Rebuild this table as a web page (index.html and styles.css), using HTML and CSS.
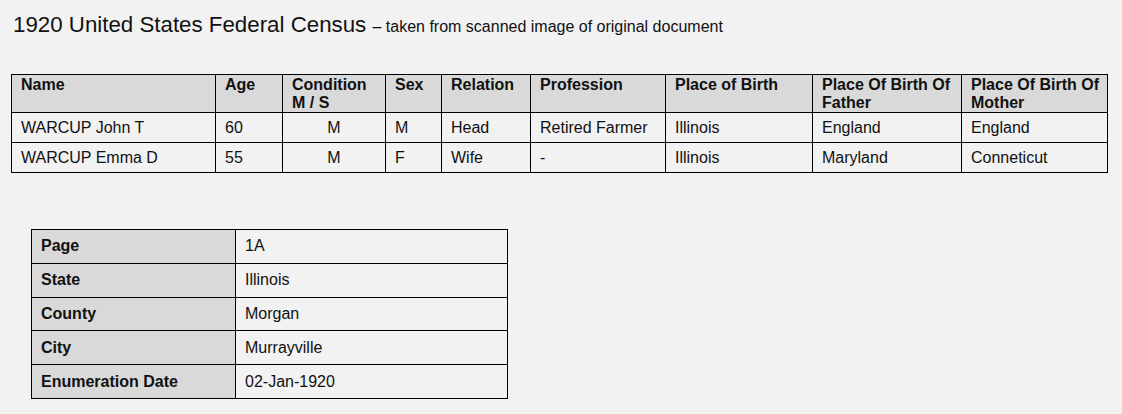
FILE: index.html
```html
<!DOCTYPE html>
<html lang="en">
<head>
<meta charset="utf-8">
<title>1920 United States Federal Census</title>
<link rel="stylesheet" href="styles.css">
</head>
<body>
<div class="page">
  <h1 class="title">1920 United States Federal Census <span class="sub">– taken from scanned image of original document</span></h1>

  <table class="census">
    <colgroup>
      <col class="c-name"><col class="c-age"><col class="c-cond"><col class="c-sex"><col class="c-rel"><col class="c-prof"><col class="c-pob"><col class="c-pobf"><col class="c-pobm">
    </colgroup>
    <thead>
      <tr>
        <th>Name</th>
        <th>Age</th>
        <th>Condition<br>M / S</th>
        <th>Sex</th>
        <th>Relation</th>
        <th>Profession</th>
        <th>Place of Birth</th>
        <th>Place Of Birth Of Father</th>
        <th>Place Of Birth Of Mother</th>
      </tr>
    </thead>
    <tbody>
      <tr>
        <td>WARCUP John T</td>
        <td>60</td>
        <td class="center">M</td>
        <td>M</td>
        <td>Head</td>
        <td>Retired Farmer</td>
        <td>Illinois</td>
        <td>England</td>
        <td>England</td>
      </tr>
      <tr>
        <td>WARCUP Emma D</td>
        <td>55</td>
        <td class="center">M</td>
        <td>F</td>
        <td>Wife</td>
        <td>-</td>
        <td>Illinois</td>
        <td>Maryland</td>
        <td>Conneticut</td>
      </tr>
    </tbody>
  </table>

  <table class="details">
    <colgroup><col class="d-label"><col class="d-value"></colgroup>
    <tbody>
      <tr><th>Page</th><td>1A</td></tr>
      <tr><th>State</th><td>Illinois</td></tr>
      <tr><th>County</th><td>Morgan</td></tr>
      <tr><th>City</th><td>Murrayville</td></tr>
      <tr><th>Enumeration Date</th><td>02-Jan-1920</td></tr>
    </tbody>
  </table>
</div>
</body>
</html>
```

FILE: styles.css
```css
html, body {
  margin: 0;
  padding: 0;
  background: #f2f2f2;
}
body {
  font-family: "Liberation Sans", Arial, sans-serif;
  color: #111;
}
.page {
  padding: 12px 0 0 11px;
}
.title {
  margin: 0 0 35px 2px;
  font-size: 22.3px;
  font-weight: normal;
  line-height: 25px;
  color: #111;
}
.title .sub {
  font-size: 16px;
}
table {
  border-collapse: collapse;
  table-layout: fixed;
}
.census {
  width: 1096px;
}
.c-name { width: 204px; }
.c-age { width: 67px; }
.c-cond { width: 103px; }
.c-sex { width: 56px; }
.c-rel { width: 89px; }
.c-prof { width: 135px; }
.c-pob { width: 147px; }
.c-pobf { width: 149px; }
.c-pobm { width: 146px; }

.census th, .census td {
  border: 1px solid #000;
  text-align: left;
  padding: 0 9px;
}
.census th {
  background: #d9d9d9;
  font-weight: bold;
  font-size: 16px;
  line-height: 18px;
  vertical-align: top;
  padding-top: 1px;
  padding-bottom: 0;
  padding-right: 2px;
  height: 36px;
  box-sizing: content-box;
}
.census td {
  font-size: 16px;
  height: 29px;
  vertical-align: middle;
}
.census td.center {
  text-align: center;
}

.details {
  margin: 56px 0 0 20px;
  width: 476px;
}
.d-label { width: 204px; }
.d-value { width: 272px; }
.details th, .details td {
  border: 1px solid #000;
  text-align: left;
  padding: 0 9px;
  height: 32.8px;
  vertical-align: middle;
}
.details th {
  background: #d9d9d9;
  font-weight: bold;
  font-size: 16px;
}
.details td {
  font-size: 16px;
}
```
